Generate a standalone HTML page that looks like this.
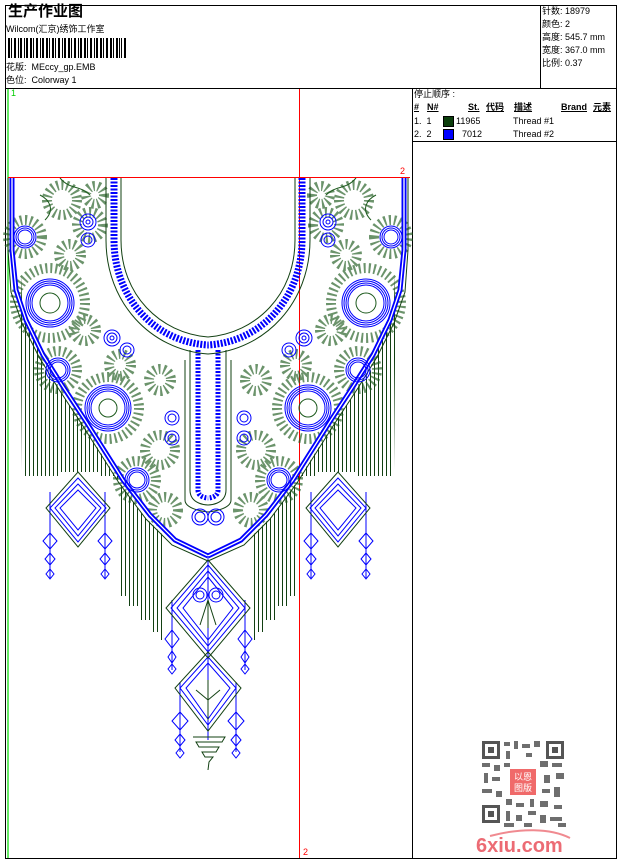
<!DOCTYPE html>
<html><head><meta charset="utf-8">
<style>
html,body{margin:0;padding:0;background:#fff;}
body{width:620px;height:860px;position:relative;overflow:hidden;font-family:"Liberation Sans","Noto Sans CJK SC",sans-serif;font-size:9px;color:#000;}
.a{position:absolute;white-space:nowrap;line-height:1;}
</style></head><body>
<svg width="620" height="860" style="position:absolute;left:0;top:0" xmlns="http://www.w3.org/2000/svg">
<defs>
<pattern id="fr" width="4" height="10" patternUnits="userSpaceOnUse"><rect x="1" y="0" width="1" height="10" fill="#124012"/></pattern>
<g id="half">
  <polygon points="20,250 22,300 45,370 80,420 118,480 118,476 100,476 100,472 60,472 60,476 22,476 22,470" fill="url(#fr)"/>
  <polygon points="118,480 140,512 165,537 165,640 160,640 160,632 150,632 150,620 138,620 138,606 126,606 126,596 118,596" fill="url(#fr)"/>
  <g fill="none" stroke="#1d5a1d" stroke-width="10" stroke-dasharray="2 3" opacity="0.65">
    <circle cx="50" cy="303" r="35"/>
    <circle cx="25" cy="237" r="17"/>
    <circle cx="108" cy="408" r="31"/>
    <circle cx="58" cy="370" r="19"/>
    <circle cx="137" cy="480" r="19"/>
    <circle cx="62" cy="200" r="15"/>
    <circle cx="70" cy="255" r="11"/>
    <circle cx="90" cy="225" r="13"/>
    <circle cx="160" cy="450" r="15"/>
    <circle cx="165" cy="510" r="13"/>
    <circle cx="120" cy="365" r="11"/>
    <circle cx="160" cy="380" r="11"/>
    <circle cx="85" cy="330" r="11"/>
    <circle cx="95" cy="195" r="9"/>
  </g>
  <g fill="none" stroke="#1d5a1d" stroke-width="1">
    <circle cx="50" cy="303" r="10"/><circle cx="108" cy="408" r="9"/>
    <path d="M60,178 C70,190 80,185 90,195 M40,195 C50,200 55,210 45,220"/>
  </g>
  <path d="M12,178 L12,250 L16,290 L26,320 L43,355 L62,385 L85,420 L123,480 L150,515 L175,540 L208,556" fill="none" stroke="#0000ff" stroke-width="5"/>
  <path d="M12,178 L12,250 L16,290 L26,320 L43,355 L62,385 L85,420 L123,480 L150,515 L175,540 L208,556" fill="none" stroke="#fff" stroke-width="1.3"/>
  <path d="M8,178 L8,250 L11,292 L22,323 L39,357 L58,388 L81,423 L119,483 L146,519 L172,545 L208,561" fill="none" stroke="#124012" stroke-width="1"/>
  <path d="M106,178 L106,240 C106,302 150,350 208,354" fill="none" stroke="#124012" stroke-width="1"/>
  <path d="M121,178 L121,240 C121,295 160,333 208,337" fill="none" stroke="#124012" stroke-width="1"/>
  <path d="M114,178 L114,240 C114,298 155,342 208,345" fill="none" stroke="#0000ff" stroke-width="7" stroke-dasharray="2 1.5"/>
  <path d="M190,350 L190,490 C190,505 208,505 208,505" fill="none" stroke="#124012" stroke-width="1"/>
  <path d="M198,350 L198,490 C198,498 208,498 208,498" fill="none" stroke="#0000ff" stroke-width="5" stroke-dasharray="2 1.5"/>
  <path d="M185,360 L185,500 C185,510 208,512 208,512" fill="none" stroke="#124012" stroke-width="1"/>
  <g fill="none" stroke="#0000ff" stroke-width="1">
    <circle cx="50" cy="303" r="24"/><circle cx="50" cy="303" r="22"/><circle cx="50" cy="303" r="20"/><circle cx="50" cy="303" r="18"/>
    <circle cx="25" cy="237" r="11"/><circle cx="25" cy="237" r="9"/><circle cx="25" cy="237" r="7"/>
    <circle cx="58" cy="370" r="12"/><circle cx="58" cy="370" r="10"/><circle cx="58" cy="370" r="8"/>
    <circle cx="108" cy="408" r="23"/><circle cx="108" cy="408" r="21"/><circle cx="108" cy="408" r="19"/><circle cx="108" cy="408" r="17"/>
    <circle cx="137" cy="480" r="12"/><circle cx="137" cy="480" r="10"/><circle cx="137" cy="480" r="8"/>
    <circle cx="88" cy="222" r="8"/><circle cx="88" cy="222" r="5"/><circle cx="88" cy="222" r="2"/>
    <circle cx="88" cy="240" r="7"/><circle cx="88" cy="240" r="4"/>
    <circle cx="112" cy="338" r="8"/><circle cx="112" cy="338" r="5"/><circle cx="112" cy="338" r="2"/>
    <circle cx="127" cy="350" r="7"/><circle cx="127" cy="350" r="4"/>
    <circle cx="172" cy="418" r="7"/><circle cx="172" cy="418" r="4"/>
    <circle cx="172" cy="438" r="7"/><circle cx="172" cy="438" r="4"/>
    <circle cx="200" cy="517" r="8"/><circle cx="200" cy="517" r="5"/>
  </g>
  <g fill="none" stroke="#0000ff" stroke-width="1">
    <path d="M78,478 L106,508 L78,542 L50,508 Z"/><path d="M78,484 L101,508 L78,536 L55,508 Z"/><path d="M78,490 L96,508 L78,530 L60,508 Z"/>
    <line x1="50" y1="492" x2="50" y2="578"/><line x1="105" y1="492" x2="105" y2="578"/>
    <path d="M50,533 L57,541 L50,549 L43,541 Z"/><path d="M50,553 L55,559 L50,565 L45,559 Z"/><path d="M50,569 L54,574 L50,579 L46,574 Z"/>
    <path d="M105,533 L112,541 L105,549 L98,541 Z"/><path d="M105,553 L110,559 L105,565 L100,559 Z"/><path d="M105,569 L109,574 L105,579 L101,574 Z"/>
  </g>
  <path d="M78,472 L110,508 L78,547 L46,508 Z" fill="none" stroke="#124012"/>
</g>
</defs>
<rect x="5.5" y="5.5" width="611" height="853" fill="none" stroke="#000"/>
<line x1="5" y1="88.5" x2="617" y2="88.5" stroke="#000"/>
<line x1="540.5" y1="5" x2="540.5" y2="88" stroke="#000"/>
<line x1="412.5" y1="88" x2="412.5" y2="859" stroke="#000"/>
<line x1="412" y1="141.5" x2="617" y2="141.5" stroke="#000"/>
<line x1="8" y1="89" x2="8" y2="858" stroke="#00dd00" stroke-width="1.2"/>
<line x1="299.5" y1="89" x2="299.5" y2="858" stroke="#ff0000"/>
<line x1="8" y1="177.5" x2="410" y2="177.5" stroke="#ff0000"/>
<g fill="#000">
<rect x="8" y="38" width="2" height="20"/><rect x="11" y="38" width="1" height="20"/><rect x="14" y="38" width="2" height="20"/><rect x="18" y="38" width="1" height="20"/><rect x="20" y="38" width="2" height="20"/><rect x="24" y="38" width="1" height="20"/><rect x="26" y="38" width="2" height="20"/><rect x="30" y="38" width="2" height="20"/><rect x="33" y="38" width="1" height="20"/><rect x="36" y="38" width="2" height="20"/><rect x="40" y="38" width="1" height="20"/><rect x="42" y="38" width="2" height="20"/><rect x="46" y="38" width="2" height="20"/><rect x="49" y="38" width="1" height="20"/><rect x="52" y="38" width="2" height="20"/><rect x="55" y="38" width="1" height="20"/><rect x="58" y="38" width="2" height="20"/><rect x="62" y="38" width="1" height="20"/><rect x="64" y="38" width="2" height="20"/><rect x="68" y="38" width="2" height="20"/><rect x="71" y="38" width="1" height="20"/><rect x="74" y="38" width="2" height="20"/><rect x="78" y="38" width="1" height="20"/><rect x="80" y="38" width="2" height="20"/><rect x="84" y="38" width="2" height="20"/><rect x="87" y="38" width="1" height="20"/><rect x="90" y="38" width="2" height="20"/><rect x="94" y="38" width="1" height="20"/><rect x="96" y="38" width="2" height="20"/><rect x="100" y="38" width="2" height="20"/><rect x="103" y="38" width="1" height="20"/><rect x="106" y="38" width="2" height="20"/><rect x="110" y="38" width="2" height="20"/><rect x="113" y="38" width="1" height="20"/><rect x="116" y="38" width="2" height="20"/><rect x="119" y="38" width="1" height="20"/><rect x="121" y="38" width="1" height="20"/><rect x="124" y="38" width="2" height="20"/>
</g>
<use href="#half"/>
<use href="#half" transform="translate(416,0) scale(-1,1)"/>
<g fill="none" stroke="#0000ff" stroke-width="1">
  <line x1="208" y1="556" x2="208" y2="740"/>
  <path d="M208,565 L245,608 L208,652 L171,608 Z"/><path d="M208,571 L239,608 L208,646 L177,608 Z"/><path d="M208,577 L233,608 L208,640 L183,608 Z"/>
  <path d="M208,657 L236,688 L208,725 L180,688 Z"/><path d="M208,663 L230,688 L208,719 L186,688 Z"/>
  <circle cx="200" cy="595" r="7"/><circle cx="200" cy="595" r="4"/><circle cx="216" cy="595" r="7"/><circle cx="216" cy="595" r="4"/>
  <line x1="172" y1="600" x2="172" y2="670"/><line x1="245" y1="600" x2="245" y2="670"/>
  <path d="M172,630 L179,639 L172,648 L165,639 Z"/><path d="M172,651 L176,657 L172,663 L168,657 Z"/><path d="M172,664 L176,669 L172,674 L168,669 Z"/>
  <path d="M245,630 L252,639 L245,648 L238,639 Z"/><path d="M245,651 L249,657 L245,663 L241,657 Z"/><path d="M245,664 L249,669 L245,674 L241,669 Z"/>
  <line x1="180" y1="682" x2="180" y2="752"/><line x1="236" y1="682" x2="236" y2="752"/>
  <path d="M180,712 L188,721 L180,730 L172,721 Z"/><path d="M180,734 L185,740 L180,746 L175,740 Z"/><path d="M180,748 L184,753 L180,758 L176,753 Z"/>
  <path d="M236,712 L244,721 L236,730 L228,721 Z"/><path d="M236,734 L241,740 L236,746 L231,740 Z"/><path d="M236,748 L240,753 L236,758 L232,753 Z"/>
</g>
<g fill="none" stroke="#124012" stroke-width="1">
  <path d="M208,560 L250,608 L208,658 L166,608 Z"/>
  <path d="M208,652 L241,688 L208,731 L175,688 Z"/>
  <path d="M208,600 L200,625 M208,600 L216,625 M208,600 L208,628 M196,690 L208,700 L220,690 M208,680 L208,720"/>
  <path d="M193,737 L225,737 L222,742 L196,742 L199,747 L219,747 L216,752 L202,752 L205,757 L213,757 L209,762 L208,770"/>
</g>
</svg>
<div class="a" style="left:8px;top:4px;font-size:15px;font-weight:bold;">生产作业图</div>
<div class="a" style="left:6px;top:25px;">Wilcom(汇京)绣饰工作室</div>
<div class="a" style="left:6px;top:63px;">花版:&nbsp; MEccy_gp.EMB</div>
<div class="a" style="left:6px;top:76px;">色位:&nbsp; Colorway 1</div>
<div class="a" style="left:542px;top:7px;">针数: 18979</div>
<div class="a" style="left:542px;top:20px;">颜色: 2</div>
<div class="a" style="left:542px;top:33px;">高度: 545.7 mm</div>
<div class="a" style="left:542px;top:46px;">宽度: 367.0 mm</div>
<div class="a" style="left:542px;top:59px;">比例: 0.37</div>
<div class="a" style="left:11px;top:89px;color:#00cc00;">1</div>
<div class="a" style="left:400px;top:167px;color:#ff0000;">2</div>
<div class="a" style="left:303px;top:848px;color:#ff0000;">2</div>
<div class="a" style="left:414px;top:90px;">停止顺序 :</div>
<div class="a" style="left:414px;top:103px;font-weight:bold;text-decoration:underline;">#</div>
<div class="a" style="left:427px;top:103px;font-weight:bold;text-decoration:underline;">N#</div>
<div class="a" style="left:468px;top:103px;font-weight:bold;text-decoration:underline;">St.</div>
<div class="a" style="left:486px;top:103px;font-weight:bold;text-decoration:underline;">代码</div>
<div class="a" style="left:514px;top:103px;font-weight:bold;text-decoration:underline;">描述</div>
<div class="a" style="left:561px;top:103px;font-weight:bold;text-decoration:underline;">Brand</div>
<div class="a" style="left:593px;top:103px;font-weight:bold;text-decoration:underline;">元素</div>
<div class="a" style="left:414px;top:117px;">1.&nbsp; 1</div>
<div style="position:absolute;left:443px;top:116px;width:9px;height:9px;background:#0b3d0b;border:1px solid #000;"></div>
<div class="a" style="left:456px;top:117px;">11965</div>
<div class="a" style="left:513px;top:117px;">Thread #1</div>
<div class="a" style="left:414px;top:130px;">2.&nbsp; 2</div>
<div style="position:absolute;left:443px;top:129px;width:9px;height:9px;background:#0000ff;border:1px solid #000;"></div>
<div class="a" style="left:462px;top:130px;">7012</div>
<div class="a" style="left:513px;top:130px;">Thread #2</div>
<svg width="90" height="90" style="position:absolute;left:480px;top:739px" viewBox="0 0 90 90">
<g fill="#555"><rect x="2" y="2" width="18" height="18"/><rect x="66" y="2" width="18" height="18"/><rect x="2" y="66" width="18" height="18"/></g>
<g fill="#fff"><rect x="5" y="5" width="12" height="12"/><rect x="69" y="5" width="12" height="12"/><rect x="5" y="69" width="12" height="12"/></g>
<g fill="#555"><rect x="8" y="8" width="6" height="6"/><rect x="72" y="8" width="6" height="6"/><rect x="8" y="72" width="6" height="6"/></g>
<g fill="#555" opacity="0.85">
<rect x="24" y="3" width="6" height="4"/><rect x="34" y="2" width="4" height="8"/><rect x="42" y="5" width="8" height="4"/><rect x="54" y="2" width="6" height="6"/><rect x="26" y="12" width="4" height="8"/><rect x="46" y="14" width="6" height="4"/>
<rect x="2" y="24" width="8" height="4"/><rect x="14" y="26" width="6" height="6"/><rect x="24" y="24" width="6" height="4"/><rect x="60" y="22" width="8" height="6"/><rect x="72" y="24" width="10" height="4"/>
<rect x="4" y="34" width="4" height="10"/><rect x="12" y="38" width="8" height="4"/><rect x="64" y="36" width="6" height="8"/><rect x="76" y="34" width="8" height="6"/>
<rect x="2" y="50" width="10" height="4"/><rect x="16" y="52" width="6" height="6"/><rect x="62" y="50" width="8" height="4"/><rect x="74" y="48" width="6" height="10"/>
<rect x="26" y="60" width="6" height="6"/><rect x="36" y="64" width="8" height="4"/><rect x="50" y="60" width="4" height="8"/><rect x="60" y="62" width="8" height="6"/><rect x="74" y="66" width="8" height="4"/>
<rect x="26" y="72" width="4" height="10"/><rect x="36" y="76" width="6" height="6"/><rect x="48" y="72" width="8" height="4"/><rect x="60" y="76" width="6" height="8"/><rect x="70" y="78" width="12" height="4"/>
<rect x="24" y="84" width="10" height="4"/><rect x="44" y="84" width="8" height="4"/><rect x="78" y="84" width="8" height="4"/>
</g>
<rect x="30" y="30" width="26" height="26" fill="#f06a6a"/>
<text x="43" y="41" font-size="9" fill="#fff" text-anchor="middle" font-family="Noto Sans CJK SC,sans-serif">以恩</text>
<text x="43" y="52" font-size="9" fill="#fff" text-anchor="middle" font-family="Noto Sans CJK SC,sans-serif">图版</text>
</svg>
<svg width="110" height="32" style="position:absolute;left:470px;top:826px">
<path d="M20,10 C50,2 80,2 100,12" fill="none" stroke="#f08a90" stroke-width="2"/>
<text x="6" y="26" font-size="20" font-weight="bold" fill="#ec6b74" font-family="Liberation Sans,sans-serif">6xiu.com</text>
</svg>
</body></html>
